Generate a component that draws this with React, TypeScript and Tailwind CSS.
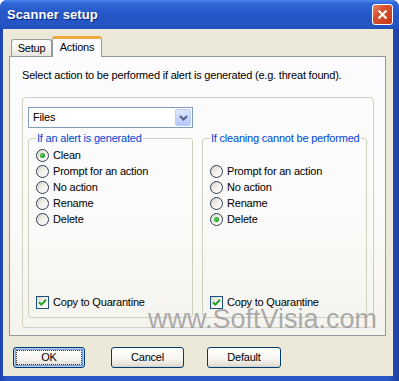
import React from "react";

const font = "font-['Liberation_Sans',Arial,sans-serif]";

const Radio = ({ checked = false }: { checked?: boolean }) => (
  <span className="w-[13px] h-[13px] rounded-full border border-[#2C3D55] bg-[linear-gradient(135deg,#D8D5CA_0%,#F4F3EE_55%,#FFFFFF_100%)] flex items-center justify-center shrink-0">
    {checked && (
      <span className="w-[5px] h-[5px] rounded-full bg-[radial-gradient(circle_at_40%_40%,#6ED36E,#21A121_60%,#1A8A1A)]" />
    )}
  </span>
);

const Check = () => (
  <span className="w-[13px] h-[13px] border border-[#1C5180] bg-[linear-gradient(135deg,#DCDAD0_0%,#F6F5F1_60%,#FFFFFF_100%)] flex items-center justify-center shrink-0">
    <svg width="9" height="9" viewBox="0 0 9 9">
      <path d="M1 4.2 L3.4 6.6 L8 1.8" fill="none" stroke="#21A121" strokeWidth="2" />
    </svg>
  </span>
);

const Row = ({ children }: { children?: React.ReactNode }) => (
  <div className="h-[16px] flex items-center gap-[4px]">{children}</div>
);

const Btn = ({
  label,
  w,
  primary = false,
  cls = "",
}: {
  label: string;
  w: string;
  primary?: boolean;
  cls?: string;
}) => (
  <div
    className={`${w} ${cls} h-[21px] rounded-[3px] border border-[#003C74] bg-[linear-gradient(180deg,#FFFFFF_0%,#F7F6F2_55%,#E3E0D6_90%,#D6D0C5_100%)] flex items-center justify-center p-[2px] ${
      primary ? "shadow-[inset_0_0_0_1px_#B6CDF2,inset_0_0_0_2px_#7A9DE6]" : ""
    }`}
  >
    <div
      className={`w-full h-full flex items-center justify-center text-[11px] tracking-[-0.2px] text-black ${
        primary ? "border border-dotted border-[#333]" : ""
      }`}
    >
      {label}
    </div>
  </div>
);

export default function App() {
  return (
    <div
      className={`${font} relative w-[399px] h-[381px] flex flex-col rounded-t-[7px] bg-[linear-gradient(90deg,#1A43B0_0%,#2A58C8_2%,#2A58C8_97%,#1A3E9E_100%)] overflow-hidden`}
    >
      {/* title bar */}
      <div className="h-[29px] shrink-0 flex items-center pl-[7px] pr-[6px] bg-[linear-gradient(180deg,#4A86EE_0%,#2F66D8_12%,#2757C8_45%,#2554C4_85%,#2050BA_100%)]">
        <span className="text-white font-bold text-[13px] [text-shadow:1px_1px_0_#0A2A80] tracking-[0.1px]">
          Scanner setup
        </span>
        <div className="ml-auto w-[21px] h-[21px] rounded-[3px] border border-white bg-[linear-gradient(135deg,#E88A72_0%,#D9522F_35%,#C53A1A_100%)] flex items-center justify-center">
          <svg width="11" height="11" viewBox="0 0 11 11">
            <path d="M1.5 1.5 L9.5 9.5 M9.5 1.5 L1.5 9.5" stroke="#FFFFFF" strokeWidth="2.2" />
          </svg>
        </div>
      </div>

      {/* body */}
      <div className="ml-[3px] mr-[6px] mb-[5px] flex-1 bg-[#ECE9D8] pt-[7px] pl-[6px] flex flex-col">
        {/* tabs */}
        <div className="h-[20px] flex items-end pl-[2px]">
          <div className="w-[41px] h-[17px] border border-b-0 border-[#919B9C] rounded-t-[3px] bg-[linear-gradient(180deg,#FFFFFF_0%,#F3F3EF_60%,#E6E5DE_100%)] flex items-center justify-center text-[11px] tracking-[-0.2px] text-black">
            Setup
          </div>
          <div className="relative z-10 -mb-px w-[50px] h-[21px] border-x border-[#919B9C] border-t-[3px] border-t-[#F0A93A] rounded-t-[3px] bg-[#FCFCFE] flex items-center justify-center text-[11px] tracking-[-0.2px] text-black pb-[1px]">
            Actions
          </div>
        </div>

        {/* panel */}
        <div className="w-[377px] h-[280px] border border-[#919B9C] bg-[linear-gradient(180deg,#FCFCFE_0%,#FAFAF8_60%,#F4F3EE_100%)] pt-[12px] pl-[12px]">
          <div className="h-[13px] leading-[13px] text-[11px] tracking-[-0.2px] text-black">
            Select action to be performed if alert is generated (e.g. threat found).
          </div>

          <div className="mt-[15px] w-[352px] h-[231px] rounded-[4px] border border-[#D0D0BF] pt-[9px] pl-[5px]">
            {/* combo */}
            <div className="w-[165px] h-[21px] border border-[#7F9DB9] bg-white flex items-center">
              <span className="pl-[4px] text-[11px] tracking-[-0.2px] text-black">Files</span>
              <div className="ml-auto mr-[1px] w-[16px] h-[17px] rounded-[2px] border border-[#B9CCF5] bg-[linear-gradient(180deg,#DCE6FD_0%,#C3D3FC_60%,#B2C6F7_100%)] flex items-center justify-center">
                <svg width="9" height="6" viewBox="0 0 9 6">
                  <path d="M1 1 L4.5 4.5 L8 1" fill="none" stroke="#4D6185" strokeWidth="2" />
                </svg>
              </div>
            </div>

            {/* groups */}
            <div className="mt-[4px] flex gap-[9px]">
              <fieldset className="w-[165px] h-[186px] rounded-[3px] border border-[#D0D0BF] pl-[7px]">
                <legend className="px-[1px] h-[13px] leading-[13px] text-[11px] tracking-[-0.2px] text-[#0046D5]">
                  If an alert is generated
                </legend>
                <div className="h-[172px] pt-[2px] pb-[7px] flex flex-col text-[11px] tracking-[-0.2px] text-black">
                  <Row>
                    <Radio checked />
                    Clean
                  </Row>
                  <Row>
                    <Radio />
                    Prompt for an action
                  </Row>
                  <Row>
                    <Radio />
                    No action
                  </Row>
                  <Row>
                    <Radio />
                    Rename
                  </Row>
                  <Row>
                    <Radio />
                    Delete
                  </Row>
                  <div className="mt-auto">
                    <Row>
                      <Check />
                      Copy to Quarantine
                    </Row>
                  </div>
                </div>
              </fieldset>

              <fieldset className="w-[165px] h-[186px] rounded-[3px] border border-[#D0D0BF] pl-[7px]">
                <legend className="px-[1px] h-[13px] leading-[13px] text-[11px] tracking-[-0.2px] text-[#0046D5]">
                  If cleaning cannot be performed
                </legend>
                <div className="h-[172px] pt-[2px] pb-[7px] flex flex-col text-[11px] tracking-[-0.2px] text-black">
                  <Row />
                  <Row>
                    <Radio />
                    Prompt for an action
                  </Row>
                  <Row>
                    <Radio />
                    No action
                  </Row>
                  <Row>
                    <Radio />
                    Rename
                  </Row>
                  <Row>
                    <Radio checked />
                    Delete
                  </Row>
                  <div className="mt-auto">
                    <Row>
                      <Check />
                      Copy to Quarantine
                    </Row>
                  </div>
                </div>
              </fieldset>
            </div>
          </div>
        </div>

        {/* buttons */}
        <div className="mt-[11px] ml-[4px] flex">
          <Btn label="OK" w="w-[72px]" primary />
          <Btn label="Cancel" w="w-[73px]" cls="ml-[26px]" />
          <Btn label="Default" w="w-[74px]" cls="ml-[23px]" />
        </div>
      </div>

      {/* watermark */}
      <div className="absolute left-[148px] top-[306px] text-[27px] leading-none text-[#8C8C8C] opacity-70 [text-shadow:0_0_1px_#FFFFFF] pointer-events-none select-none">
        www.SoftVisia.com
      </div>
    </div>
  );
}
